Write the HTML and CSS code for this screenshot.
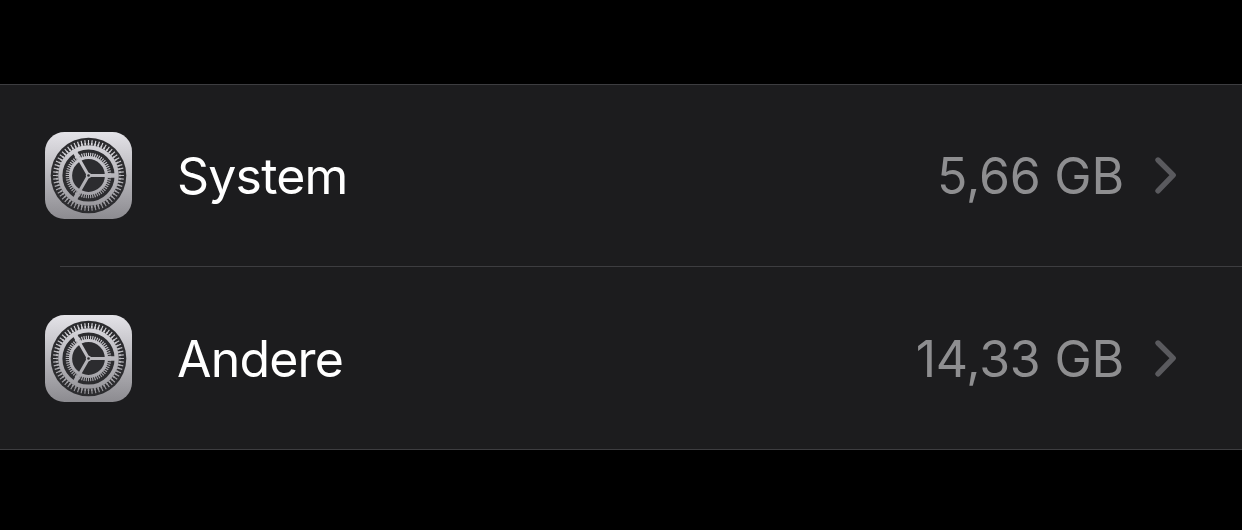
FILE: index.html
```
<!DOCTYPE html>
<html lang="de">
<head>
    <meta charset="UTF-8">
    <title>Speicher</title>
    <meta name="viewport" content="width=device-width, initial-scale=1.0">
    <link rel="stylesheet" href="styles.css">
</head>
<body>
    <!-- settings icon, used by both rows -->
    <svg class="defs" width="0" height="0">
        <defs>
            <linearGradient id="metal" gradientUnits="userSpaceOnUse" x1="0" y1="-43.5" x2="0" y2="43.5">
                <stop offset="0" stop-color="#e4e3e8"/>
                <stop offset="1" stop-color="#8c8b90"/>
            </linearGradient>
            <symbol id="gear" viewBox="-43.5 -43.5 87 87">
                <rect x="-43.5" y="-43.5" width="87" height="87" rx="19.5" fill="url(#metal)"/>
                <circle r="37.8" fill="#2c2c2f"/>
                <g fill="none" stroke="url(#metal)">
                    <!-- outer gear: tapered teeth, then the ring -->
                    <circle r="33" stroke-width="5" pathLength="120" stroke-dasharray="0.65 1.35" stroke-dashoffset="0.325"/>
                    <circle r="31.4" stroke-width="2.4" pathLength="120" stroke-dasharray="1 1" stroke-dashoffset="0.5"/>
                    <circle r="28.2" stroke-width="4.2"/>
                    <!-- inner gear -->
                    <circle r="21" stroke-width="3.6" pathLength="120" stroke-dasharray="1 1" stroke-dashoffset="0.5"/>
                    <circle r="18" stroke-width="3.2"/>
                    <path d="M0 0H27M0 0L-13.5 -23.4M0 0L-13.5 23.4" stroke-width="3.1"/>
                    <path d="M21 0H27M-10.5 -18.2L-13.5 -23.4M-10.5 18.2L-13.5 23.4" stroke-width="4.6"/>
                </g>
                <circle r="2.7" fill="url(#metal)"/>
                <circle r="1.3" fill="#2c2c2f"/>
            </symbol>
        </defs>
    </svg>

    <div class="list">
        <div class="row">
            <svg class="icon"><use href="#gear"/></svg>
            <div class="label">System</div>
            <div class="value">5,66 GB</div>
            <svg class="chevron" viewBox="0 0 24 40"><path d="M4 4L19.2 19.2L4 34.8"/></svg>
        </div>
        <div class="divider"></div>
        <div class="row">
            <svg class="icon"><use href="#gear"/></svg>
            <div class="label">Andere</div>
            <div class="value">14,33 GB</div>
            <svg class="chevron" viewBox="0 0 24 40"><path d="M4 4L19.2 19.2L4 34.8"/></svg>
        </div>
    </div>
</body>
</html>
```
FILE: styles.css
```
body {
    background: #000;
    margin: 0;
    padding: 84px 0 0;
    font-family: Inter, "Liberation Sans", sans-serif;
}
.defs {
    display: block;
}
.list {
    background: #1c1c1e;
    border-top: 1px solid #3d3d40;
    border-bottom: 1px solid #3d3d40;
}
.row {
    display: flex;
    align-items: center;
    box-sizing: border-box;
    height: 181px;
    padding: 0 64px 0 45px;
}
.divider {
    height: 1px;
    margin-left: 60px;
    margin-bottom: 1px;
    background: #3d3d40;
}
.icon {
    width: 87px;
    height: 87px;
    margin-right: 45px;
}
.label {
    flex: 1;
    color: #fff;
    font-size: 50px;
    line-height: 60px;
    padding-top: 1px;
    letter-spacing: -0.8px;
}
.value {
    color: #8e8e90;
    font-size: 50px;
    line-height: 60px;
    padding-top: 1px;
    letter-spacing: -0.2px;
}
.chevron {
    width: 24px;
    height: 40px;
    margin-left: 30px;
    fill: none;
    stroke: #5a5a5e;
    stroke-width: 5.4;
    stroke-linecap: round;
    stroke-linejoin: round;
}
```
